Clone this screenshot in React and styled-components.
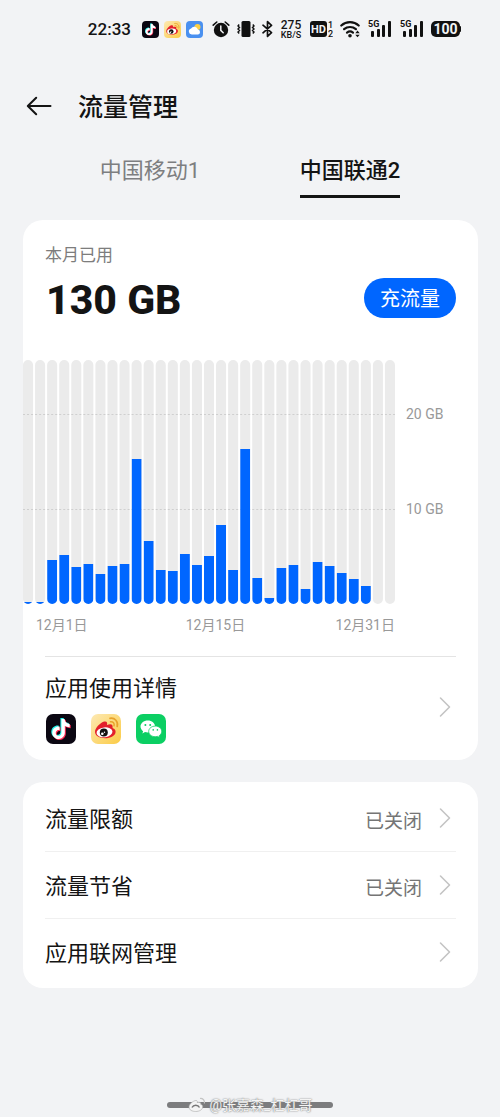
import React from "react";
import styled, { createGlobalStyle } from "styled-components";
import { SiTiktok } from "react-icons/si";

const GlobalStyle = createGlobalStyle`
  * { box-sizing: border-box; }
  body {
    margin: 0;
    background: #f2f3f5;
    color: #141414;
    font-family: Roboto, "Noto Sans CJK SC", sans-serif;
  }
  button {
    margin: 0;
    padding: 0;
    border: 0;
    background: none;
    color: inherit;
    font: inherit;
    cursor: pointer;
  }
  svg { display: block; flex: none; }
`;

const Page = styled.div`
  display: flex;
  flex-direction: column;
  min-height: 100vh;
`;

/* ---------- status bar ---------- */

const StatusBar = styled.div`
  display: flex;
  align-items: center;
  justify-content: flex-end;
  height: 58px;
  padding-right: 39px;
`;

const Clock = styled.time`
  margin-right: 11px;
  font-size: 17px;
  line-height: 24px;
  font-weight: 500;
`;

const StatusGroup = styled.div`
  display: flex;
  align-items: center;
  gap: ${(p) => p.$gap}px;
  margin-right: ${(p) => p.$after || 0}px;
`;

const Speed = styled.div`
  width: 22px;
  text-align: center;
  font-size: 12px;
  line-height: 12px;
  font-weight: 500;
  white-space: nowrap;
`;

const SpeedUnit = styled.div`
  font-size: 9px;
  line-height: 9px;
`;

/* ---------- header and tabs ---------- */

const Header = styled.header`
  display: flex;
  align-items: center;
  gap: 26px;
  height: 96px;
  padding: 0 26px;
`;

const Title = styled.h1`
  margin: 0;
  padding-top: 4px;
  font-size: 25px;
  line-height: 36px;
  font-weight: 500;
`;

const Tabs = styled.div`
  display: flex;
  padding: 0 50px;
`;

const Tab = styled.button`
  flex: 1;
  display: flex;
  justify-content: center;
  color: ${(p) => (p.$active ? "#141414" : "#7d7e80")};
  font-size: 22px;
  line-height: 34px;
  font-weight: ${(p) => (p.$active ? 500 : 400)};
`;

const TabLabel = styled.span`
  height: 44px;
  border-bottom: 3px solid ${(p) => (p.$active ? "#141414" : "transparent")};
`;

/* ---------- cards ---------- */

const Card = styled.section`
  margin: 22px 22px 0 23px;
  padding: ${(p) => p.$pad || 0}px 0;
  border-radius: 20px;
  background: #fff;
`;

const Summary = styled.div`
  padding: 22px 22px 0;
`;

const Caption = styled.div`
  color: #7d7d7d;
  font-size: 17px;
  line-height: 26px;
`;

const TotalRow = styled.div`
  display: flex;
  align-items: flex-start;
  justify-content: space-between;
  margin-top: 6px;
`;

const Total = styled.div`
  padding-left: 1px;
  font-size: 41px;
  line-height: 52px;
  font-weight: 800;
`;

const TopUpButton = styled.button`
  && {
    height: 40px;
    margin-top: 4px;
    padding: 2px 16px 0;
    border-radius: 20px;
    background: #0066ff;
    color: #fff;
    font-size: 20px;
    line-height: 38px;
  }
`;

const Chart = styled.div`
  display: flex;
  height: 244px;
  margin-top: 34px;
`;

const Plot = styled.svg`
  && {
    flex: 1;
    min-width: 0;
    height: 244px;
  }
`;

const YAxis = styled.div`
  display: flex;
  flex-direction: column;
  gap: 79px;
  width: 83px;
  padding: 46px 0 0 11px;
  color: #999;
  font-size: 14px;
  line-height: 16px;
`;

const XAxis = styled.div`
  display: grid;
  grid-template-columns: 1fr 1fr auto;
  margin-top: 11px;
  padding: 0 83px 0 13px;
  color: #999;
  font-size: 14px;
  line-height: 20px;
`;

const Divider = styled.hr`
  height: 1px;
  margin: ${(p) => p.$top || 0}px 22px 0;
  border: 0;
  background: ${(p) => (p.$light ? "#f0f0f0" : "#e4e4e4")};
`;

const RowButton = styled.button`
  && {
    display: flex;
    align-items: center;
    width: 100%;
    padding: ${(p) => (p.$tall ? "13px 27px 16px 22px" : "0 27px 0 22px")};
    min-height: 66px;
    text-align: left;
  }
`;

const RowBody = styled.span`
  flex: 1;
  display: flex;
  flex-direction: column;
  gap: 10px;
`;

const RowLabel = styled.span`
  padding-top: 4px;
  font-size: 22px;
  line-height: 30px;
`;

const RowValue = styled.span`
  margin-right: 17px;
  padding-top: 8px;
  color: #757575;
  font-size: 19px;
  line-height: 28px;
`;

const AppIcons = styled.span`
  display: flex;
  gap: 15px;
  padding-left: 1px;
`;

/* ---------- bottom ---------- */

const Footer = styled.footer`
  position: relative;
  display: flex;
  justify-content: center;
  margin-top: auto;
  padding: 20px 0 9px;
`;

const HomeBar = styled.div`
  width: 166px;
  height: 6px;
  border-radius: 3px;
  background: #7c7c7e;
`;

const Signature = styled.div`
  position: absolute;
  left: 0;
  right: 0;
  bottom: 2px;
  display: flex;
  align-items: center;
  justify-content: center;
  gap: 4px;
  color: #f4f4f4;
  font-size: 14px;
  line-height: 20px;
  text-shadow: 0 0 1px #777, 0 0 2px #999;
`;

/* ---------- icons ---------- */

function DouyinIcon({ size }) {
  return (
    <svg width={size} height={size} viewBox="0 0 30 30">
      <rect width="30" height="30" rx="7" fill="#0b0712" />
      <g transform="translate(5 5)">
        <SiTiktok x="-1" y="-1" size={20} color="#25f4ee" />
        <SiTiktok x="1" y="1" size={20} color="#fe2c55" />
        <SiTiktok x="0" y="0" size={20} color="#ffffff" />
      </g>
    </svg>
  );
}

function WeiboIcon({ size }) {
  return (
    <svg width={size} height={size} viewBox="0 0 30 30">
      <defs>
        <linearGradient id="weibo-bg" x1="0" y1="0" x2="1" y2="1">
          <stop offset="0" stopColor="#fde9b4" />
          <stop offset="1" stopColor="#fbcb45" />
        </linearGradient>
      </defs>
      <rect width="30" height="30" rx="7" fill="url(#weibo-bg)" />
      <path
        d="M4 18c0-4 5.500-9.500 9.200-10.400 2.600-.6 3.400 1 2.800 3.300 2.800-1.200 6-1.100 5.600 1.900-.1.700-.2 1 .3 1.400 1.600.6 2.700 1.700 2.700 3.500 0 4-5.200 6.500-10.500 6.500S4 21.800 4 18z"
        fill="#e3202b"
      />
      <ellipse cx="13.500" cy="18.300" rx="8" ry="4.900" transform="rotate(-7 13.500 18.300)" fill="#fff" />
      <circle cx="12.800" cy="18.400" r="4" fill="#111" />
      <circle cx="11.300" cy="19.700" r="1.300" fill="#fff" />
      <circle cx="13.500" cy="18.300" r=".7" fill="#fff" />
      <path d="M19 4.300c4.800-.8 8.500 3.200 7.200 8.200" fill="none" stroke="#e8a22c" strokeWidth="1.700" strokeLinecap="round" />
      <path d="M19.500 7.800c2.700-.3 4.200 1.600 3.500 4" fill="none" stroke="#e8a22c" strokeWidth="1.500" strokeLinecap="round" />
    </svg>
  );
}

function WeChatIcon({ size }) {
  return (
    <svg width={size} height={size} viewBox="0 0 30 30">
      <rect width="30" height="30" rx="7" fill="#0bcf63" />
      <path d="M11.800 6.600c-4.100 0-7.300 2.700-7.300 6 0 1.900 1 3.500 2.600 4.600l-.7 2.200 2.600-1.300c.9.300 1.800.4 2.800.4 4.100 0 7.300-2.600 7.300-5.900s-3.200-6-7.300-6z" fill="#fff" />
      <path d="M19.300 12.100c-3.700 0-6.600 2.300-6.600 5.300s2.900 5.300 6.600 5.300c.8 0 1.600-.1 2.300-.3l2.200 1.200-.6-1.900c1.500-1 2.500-2.500 2.500-4.300 0-3-2.800-5.300-6.400-5.300z" fill="#fff" stroke="#0bcf63" strokeWidth=".8" />
      <g fill="#0bcf63">
        <circle cx="9.400" cy="10.900" r="1" />
        <circle cx="14.200" cy="10.900" r="1" />
        <circle cx="17.200" cy="15.900" r=".8" />
        <circle cx="21.400" cy="15.900" r=".8" />
      </g>
    </svg>
  );
}

function WeatherIcon() {
  return (
    <svg width="17" height="17" viewBox="0 0 17 17">
      <rect width="17" height="17" rx="4" fill="#4a90f0" />
      <circle cx="11.500" cy="6" r="3" fill="#fbcf45" />
      <path d="M5.800 13.500a3 3 0 0 1-.7-5.900 3.700 3.700 0 0 1 6.800 1 2.500 2.500 0 0 1 .2 4.900z" fill="#fff" />
    </svg>
  );
}

function AlarmIcon() {
  return (
    <svg width="18" height="18" viewBox="0 0 18 18">
      <circle cx="9" cy="10" r="7.200" fill="#111" />
      <path d="M1.200 5.200 4.800 2M16.800 5.200 13.200 2" stroke="#111" strokeWidth="1.600" strokeLinecap="round" />
      <path d="M8.800 6v4.400l2.400 2.400" fill="none" stroke="#f2f3f5" strokeWidth="1.500" strokeLinecap="round" />
    </svg>
  );
}

function VibrateIcon() {
  return (
    <svg width="18" height="18" viewBox="0 0 18 18">
      <rect x="4.500" y="1" width="9" height="16" rx="1.500" fill="#111" />
      <path d="M2.200 4.500 1 6l1.500 1.500L1 9l1.500 1.500L1 12l1.200 1.500M15.800 4.500 17 6l-1.500 1.500L17 9l-1.500 1.500L17 12l-1.200 1.500" fill="none" stroke="#111" strokeWidth="1.400" />
    </svg>
  );
}

function BluetoothIcon() {
  return (
    <svg width="11" height="18" viewBox="0 0 11 18">
      <path d="M1 5.200 9.500 12.600 5.500 16.300V1.700l4 3.700L1 12.800" fill="none" stroke="#111" strokeWidth="1.700" strokeLinejoin="round" strokeLinecap="round" />
    </svg>
  );
}

function HdIcon() {
  return (
    <svg width="24" height="18" viewBox="0 0 24 18" fontFamily="Roboto, sans-serif">
      <rect x="1" y="1" width="17" height="16" rx="3" fill="#111" />
      <text x="9.500" y="13" fontSize="11" fontWeight="700" textAnchor="middle" fill="#f2f3f5">HD</text>
      <text x="19" y="8" fontSize="9" fontWeight="500" fill="#111">1</text>
      <text x="19" y="17" fontSize="9" fontWeight="500" fill="#111">2</text>
    </svg>
  );
}

function WifiIcon() {
  return (
    <svg width="20" height="18" viewBox="0 0 20 18">
      <g fill="none" stroke="#111" strokeWidth="2.200" strokeLinecap="round">
        <path d="M1.300 5.500a13 13 0 0 1 17.400 0" />
        <path d="M4.100 9.200a9 9 0 0 1 11.800 0" />
        <path d="M7 12.600a5 5 0 0 1 6 0" />
      </g>
      <circle cx="10" cy="15.800" r="1.800" fill="#111" />
      <path d="m17.500 10.500 2.200 2.800h-4.400zM17.500 17.300l2.200-2.600h-4.400z" fill="#111" />
    </svg>
  );
}

function SignalIcon() {
  return (
    <svg width="25" height="18" viewBox="0 0 25 18" fontFamily="Roboto, sans-serif">
      <text x="1" y="7" fontSize="9" fontWeight="700" fill="#111">5G</text>
      <g fill="#111">
        <rect x="4" y="11" width="3" height="6" rx="1" />
        <rect x="10" y="9" width="3" height="8" rx="1" />
        <rect x="15" y="5" width="3" height="12" rx="1" />
        <rect x="21" y="1" width="3" height="16" rx="1" />
      </g>
    </svg>
  );
}

function BatteryIcon() {
  return (
    <svg width="30" height="16" viewBox="0 0 30 16" fontFamily="Roboto, sans-serif">
      <rect y="0" width="29" height="16" rx="5" fill="#111" />
      <rect x="27" y="5" width="3" height="6" rx="1" fill="#111" />
      <text x="14.500" y="13" fontSize="14" fontWeight="700" textAnchor="middle" fill="#f2f3f5">100</text>
    </svg>
  );
}

function BackIcon() {
  return (
    <svg width="26" height="22" viewBox="0 0 26 22">
      <path d="M24.500 11H2M10.200 2.700 1.800 11l8.400 8.300" fill="none" stroke="#141414" strokeWidth="2" strokeLinecap="round" strokeLinejoin="round" />
    </svg>
  );
}

function ChevronIcon() {
  return (
    <svg width="12" height="22" viewBox="0 0 12 22">
      <path d="M1.500 2 10.500 11l-9 9" fill="none" stroke="#c4c4c4" strokeWidth="1.600" strokeLinecap="round" strokeLinejoin="round" />
    </svg>
  );
}

function EyeMark() {
  return (
    <svg width="18" height="16" viewBox="0 0 18 16">
      <path d="M1 10c0-3 4.500-6.500 7-6.500 1.500 0 1.500 1 1.200 2 2.500-.8 4 0 3.500 1.800 1.500.5 2 1.300 2 2.500 0 3-3.500 4.700-7 4.700S1 13 1 10z" fill="#f4f4f4" stroke="#aaa" strokeWidth=".6" />
      <path d="M4 10.500c1.500-3 6-3 7.500 0" fill="none" stroke="#777" strokeWidth="1.500" />
      <path d="M12 1.500c3-.3 5 2 4.400 5" fill="none" stroke="#c4c4c4" strokeWidth="1.200" />
    </svg>
  );
}

/* ---------- chart ---------- */

const PLOT_HEIGHT = 244;
const DAILY_USAGE = [
  2, 2, 44, 49, 37, 40, 30, 38, 40, 145, 63, 34, 33, 50, 39, 48, 79, 34, 155,
  26, 6, 36, 39, 15, 42, 38, 31, 25, 18, 0, 0,
];

function UsagePlot() {
  return (
    <Plot viewBox="0 0 370 244" preserveAspectRatio="none" role="img" aria-label="每日流量">
      <defs>
        <clipPath id="tracks">
          {DAILY_USAGE.map((_, i) => (
            <rect key={i} x={i * 12} y="0" width="10" height={PLOT_HEIGHT} rx="5" />
          ))}
        </clipPath>
      </defs>
      <g clipPath="url(#tracks)">
        <rect width="370" height={PLOT_HEIGHT} fill="#ebebeb" />
      </g>
      <path d="M0 54.500H370M0 149.500H370" stroke="#cfcfcf" strokeWidth="1" strokeDasharray="2 2" />
      <g clipPath="url(#tracks)" fill="#0066ff">
        {DAILY_USAGE.map((h, i) => (
          <rect key={i} x={i * 12} y={PLOT_HEIGHT - h} width="10" height={h} />
        ))}
      </g>
    </Plot>
  );
}

const SETTINGS = [
  { label: "流量限额", value: "已关闭" },
  { label: "流量节省", value: "已关闭" },
  { label: "应用联网管理" },
];

export default function App() {
  return (
    <Page>
      <GlobalStyle />
      <StatusBar>
        <Clock>22:33</Clock>
        <StatusGroup $gap={5} $after={9}>
          <DouyinIcon size={17} />
          <WeiboIcon size={17} />
          <WeatherIcon />
        </StatusGroup>
        <StatusGroup $gap={7}>
          <AlarmIcon />
          <VibrateIcon />
          <BluetoothIcon />
          <Speed>
            <div>275</div>
            <SpeedUnit>KB/S</SpeedUnit>
          </Speed>
          <HdIcon />
          <WifiIcon />
          <SignalIcon />
          <SignalIcon />
          <BatteryIcon />
        </StatusGroup>
      </StatusBar>

      <Header>
        <button type="button" aria-label="返回">
          <BackIcon />
        </button>
        <Title>流量管理</Title>
      </Header>

      <Tabs role="tablist">
        <Tab type="button" role="tab" aria-selected="false">
          <TabLabel>中国移动1</TabLabel>
        </Tab>
        <Tab type="button" role="tab" aria-selected="true" $active>
          <TabLabel $active>中国联通2</TabLabel>
        </Tab>
      </Tabs>

      <Card>
        <Summary>
          <Caption>本月已用</Caption>
          <TotalRow>
            <Total>130 GB</Total>
            <TopUpButton type="button">充流量</TopUpButton>
          </TotalRow>
        </Summary>
        <Chart>
          <UsagePlot />
          <YAxis>
            <span>20 GB</span>
            <span>10 GB</span>
          </YAxis>
        </Chart>
        <XAxis>
          <span>12月1日</span>
          <span>12月15日</span>
          <span>12月31日</span>
        </XAxis>
        <Divider $top={21} />
        <RowButton type="button" $tall>
          <RowBody>
            <RowLabel>应用使用详情</RowLabel>
            <AppIcons>
              <DouyinIcon size={30} />
              <WeiboIcon size={30} />
              <WeChatIcon size={30} />
            </AppIcons>
          </RowBody>
          <ChevronIcon />
        </RowButton>
      </Card>

      <Card $pad={3}>
        {SETTINGS.map((item, i) => (
          <React.Fragment key={item.label}>
            {i > 0 && <Divider $light />}
            <RowButton type="button">
              <RowBody>
                <RowLabel>{item.label}</RowLabel>
              </RowBody>
              {item.value && <RowValue>{item.value}</RowValue>}
              <ChevronIcon />
            </RowButton>
          </React.Fragment>
        ))}
      </Card>

      <Footer>
        <HomeBar />
        <Signature>
          <EyeMark />
          @张嘉森_杠杠哥
        </Signature>
      </Footer>
    </Page>
  );
}
